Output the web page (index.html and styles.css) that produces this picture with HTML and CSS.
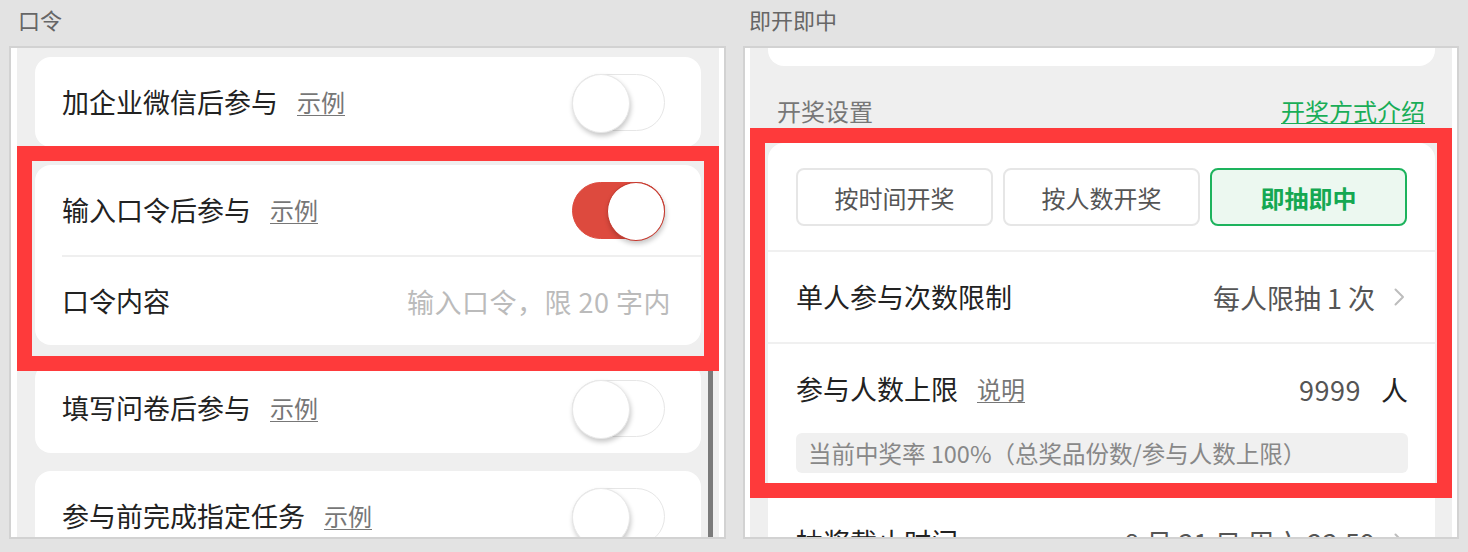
FILE: index.html
```html
<!DOCTYPE html>
<html lang="zh-CN">
<head>
<meta charset="utf-8">
<title>口令 / 即开即中</title>
<link rel="stylesheet" href="styles.css">
</head>
<body>
<div class="page">
  <section class="col col-left">
    <div class="title">口令</div>
    <div class="frame frame-left">
      <div class="screen screen-left">
        <div class="card">
          <div class="row">
            <span class="label">加企业微信后参与</span><span class="link">示例</span>
            <span class="switch"></span>
          </div>
        </div>
        <div class="card">
          <div class="row">
            <span class="label">输入口令后参与</span><span class="link">示例</span>
            <span class="switch on"></span>
          </div>
          <div class="row row-sub">
            <span class="label">口令内容</span>
            <span class="placeholder">输入口令，限 20 字内</span>
          </div>
        </div>
        <div class="card">
          <div class="row">
            <span class="label">填写问卷后参与</span><span class="link">示例</span>
            <span class="switch"></span>
          </div>
        </div>
        <div class="card">
          <div class="row">
            <span class="label">参与前完成指定任务</span><span class="link">示例</span>
            <span class="switch"></span>
          </div>
        </div>
      </div>
      <div class="scrollbar"></div>
      <div class="mark mark-left"></div>
    </div>
  </section>

  <section class="col col-right">
    <div class="title">即开即中</div>
    <div class="frame frame-right">
      <div class="screen screen-right">
        <div class="card card-stub"></div>
        <div class="section-head">
          <span class="head-text">开奖设置</span>
          <span class="head-link">开奖方式介绍</span>
        </div>
        <div class="card">
          <div class="seg">
            <div class="seg-btn">按时间开奖</div>
            <div class="seg-btn">按人数开奖</div>
            <div class="seg-btn active">即抽即中</div>
          </div>
          <div class="lrow">
            <span class="label">单人参与次数限制</span>
            <span class="value">每人限抽 1 次</span>
            <svg class="chev" width="11" height="18" viewBox="0 0 11 18"><polyline points="1.5,1.5 9,9 1.5,16.5" fill="none" stroke="#bdbdbd" stroke-width="2" stroke-linecap="round" stroke-linejoin="round"/></svg>
          </div>
          <div class="limit">
            <div class="limit-line">
              <span class="label">参与人数上限</span><span class="link">说明</span>
              <span class="num">9999</span><span class="unit">人</span>
            </div>
            <div class="rate">当前中奖率 100%（总奖品份数/参与人数上限）</div>
          </div>
          <div class="lrow">
            <span class="label">抽奖截止时间</span>
            <span class="value">8 月 31 日 周六 23:59</span>
            <svg class="chev" width="11" height="18" viewBox="0 0 11 18"><polyline points="1.5,1.5 9,9 1.5,16.5" fill="none" stroke="#bdbdbd" stroke-width="2" stroke-linecap="round" stroke-linejoin="round"/></svg>
          </div>
        </div>
      </div>
      <div class="mark mark-right"></div>
    </div>
  </section>
</div>
</body>
</html>
```

FILE: styles.css
```css
* { box-sizing: border-box; }

body {
  margin: 0;
  background: #e3e3e3;
  font-family: "Noto Sans CJK SC", "Noto Sans", sans-serif;
  color: #222;
}

.page {
  display: flex;
  gap: 17px;
  padding: 0 9px;
  height: 552px;
}

.col-left { width: 717px; }
.col-right { width: 716px; }

.title {
  height: 46px;
  line-height: 38px;
  font-size: 22px;
  color: #666;
}
.col-left .title { padding-left: 9px; }
.col-right .title { padding-left: 6px; }

.frame {
  position: relative;
  height: 493px;
  border: 2px solid #d2d2d2;
  background: #fff;
  overflow: hidden;
}
.frame-left { padding: 0 5px 0 6px; }
.frame-right { padding: 0 5px; }

.screen {
  background: #efefef;
  height: 100%;
}
.screen-left { padding: 9px 18px 0; }
.screen-right { padding: 0 17px 0 18px; }

.card {
  background: #fff;
  border-radius: 16px;
}
.screen-left .card + .card { margin-top: 18px; }

.row {
  display: flex;
  align-items: center;
  height: 90px;
  padding: 0 36px 0 27px;
}
.row-sub {
  margin-left: 27px;
  padding: 0 30px 0 0;
  border-top: 2px solid #efefef;
  justify-content: space-between;
}

.label {
  font-size: 27px;
  line-height: 36px;
  color: #222;
}

.link {
  margin-left: 19px;
  font-size: 24px;
  line-height: 36px;
  color: #777;
  text-decoration: underline;
  text-underline-offset: 3px;
  text-decoration-thickness: 1px;
}

.placeholder {
  font-size: 27px;
  letter-spacing: 0.5px;
  color: #bbb;
}

.switch {
  position: relative;
  flex: none;
  margin-left: auto;
  width: 93px;
  height: 57px;
  border-radius: 29px;
  border: 1px solid #e6e6e6;
  background: #fff;
}
.switch::after {
  content: "";
  position: absolute;
  left: -1px;
  top: -1px;
  width: 56px;
  height: 57px;
  border-radius: 50%;
  background: #fff;
  border: 1px solid #e8e8e8;
  box-shadow: 1px 3px 5px rgba(0, 0, 0, 0.22);
}
.switch.on {
  background: #dd4a3e;
  border-color: #dd4a3e;
}
.switch.on::after {
  left: auto;
  right: -1px;
  border-color: #c5372c;
}

.scrollbar {
  position: absolute;
  left: 697px;
  top: 250px;
  bottom: 0;
  width: 5px;
  background: #7a7a7a;
}

.mark {
  position: absolute;
  border: 15px solid #fe3a3b;
}
.mark-left {
  left: 6px;
  top: 98px;
  width: 702px;
  height: 225px;
}
.mark-right {
  left: 5px;
  top: 80px;
  width: 702px;
  height: 370px;
}

/* right panel */
.card-stub {
  height: 18px;
  border-radius: 0 0 16px 16px;
}

.section-head {
  display: flex;
  justify-content: space-between;
  height: 77px;
  padding: 29px 10px 0 9px;
  font-size: 24px;
  line-height: 32px;
}
.head-text { color: #777; }
.head-link {
  color: #19ad57;
  text-decoration: underline;
  text-underline-offset: 2px;
  text-decoration-thickness: 1px;
}

.seg {
  display: grid;
  grid-template-columns: repeat(3, 1fr);
  gap: 10px;
  padding: 25px 28px 24px;
}
.seg-btn {
  height: 58px;
  border: 2px solid #e6e6e6;
  border-radius: 8px;
  display: flex;
  align-items: center;
  justify-content: center;
  font-size: 24px;
  color: #555;
}
.seg-btn.active {
  border-color: #1db35d;
  background: #ecf8f0;
  color: #15a852;
  font-weight: 700;
}

.lrow {
  display: flex;
  align-items: center;
  height: 92px;
  padding: 0 30px 0 28px;
  border-top: 2px solid #f0f0f0;
}
.value {
  margin-left: auto;
  font-size: 27px;
  color: #555;
}
.chev {
  margin-left: 19px;
  flex: none;
}

.limit {
  border-top: 2px solid #f0f0f0;
  padding: 27px 27px 22px 28px;
}
.limit-line {
  display: flex;
  align-items: center;
  height: 36px;
}
.num {
  margin-left: auto;
  font-size: 27px;
  letter-spacing: 0.5px;
  color: #555;
}
.unit {
  margin-left: 20px;
  font-size: 27px;
  color: #222;
}
.rate {
  margin-top: 26px;
  height: 40px;
  line-height: 40px;
  padding-left: 12px;
  background: #f0f0f0;
  border-radius: 6px;
  font-size: 23.5px;
  color: #888;
  white-space: nowrap;
}
```
